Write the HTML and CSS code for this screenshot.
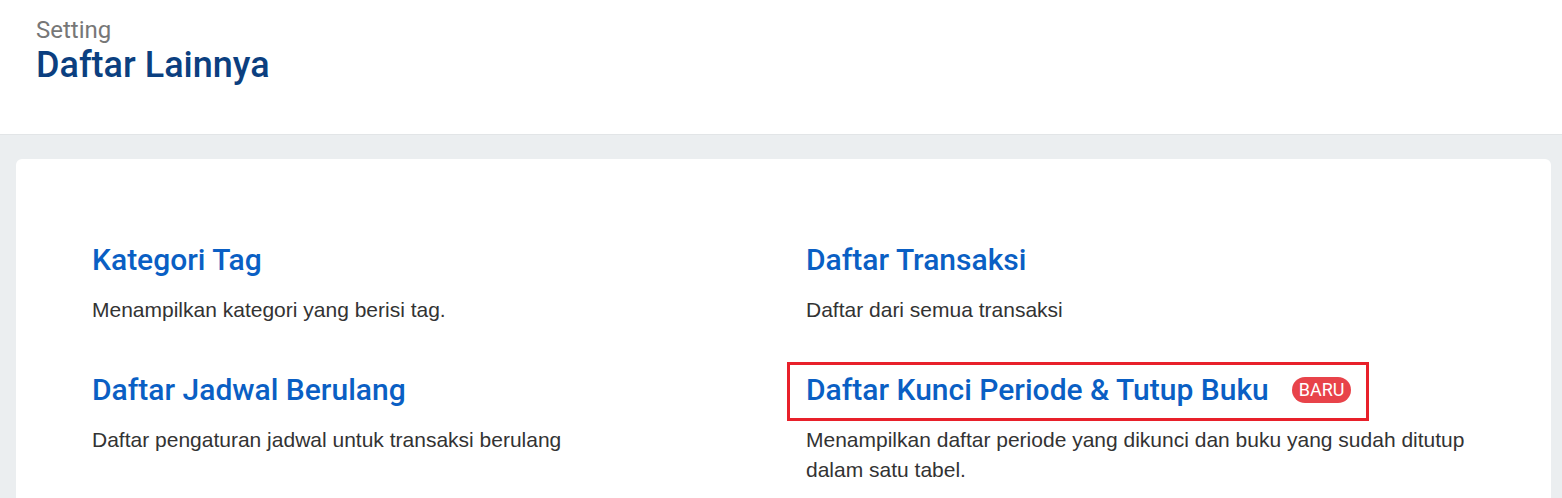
FILE: index.html
```html
<!DOCTYPE html>
<html lang="id">
<head>
  <meta charset="UTF-8" />
  <title>Setting – Daftar Lainnya</title>
  <link rel="stylesheet" href="styles.css">
</head>
<body>
  <header class="page-header">
    <p class="breadcrumb">Setting</p>
    <h1>Daftar Lainnya</h1>
  </header>

  <main class="page-body">
    <section class="card">
      <div class="list-grid">
        <div class="list-item">
          <a class="item-title" href="#">Kategori Tag</a>
          <p class="item-desc">Menampilkan kategori yang berisi tag.</p>
        </div>
        <div class="list-item">
          <a class="item-title" href="#">Daftar Transaksi</a>
          <p class="item-desc">Daftar dari semua transaksi</p>
        </div>
        <div class="list-item">
          <a class="item-title" href="#">Daftar Jadwal Berulang</a>
          <p class="item-desc">Daftar pengaturan jadwal untuk transaksi berulang</p>
        </div>
        <div class="list-item">
          <div class="title-wrap highlighted">
            <a class="item-title" href="#">Daftar Kunci Periode &amp; Tutup Buku</a>
            <span class="badge">BARU</span>
          </div>
          <p class="item-desc">Menampilkan daftar periode yang dikunci dan buku yang sudah ditutup dalam satu tabel.</p>
        </div>
      </div>
    </section>
  </main>
</body>
</html>
```

FILE: styles.css
```css
:root {
  --navy: #0b3f80;
  --link-blue: #0a5fc4;
  --gray-bg: #ebeef0;
  --text-color: #333;
  --badge-red: #e8434a;
  --mark-red: #e8202a;
}

body {
  margin: 0;
  font-family: Roboto, "Liberation Sans", sans-serif;
  background: var(--gray-bg);
  color: var(--text-color);
}

.page-header {
  box-sizing: border-box;
  background: #fff;
  padding: 16px 36px 0;
  height: 135px;
  border-bottom: 1px solid #e2e5e7;
}

.breadcrumb {
  margin: 0;
  font-size: 24px;
  line-height: 28px;
  color: #777;
}

h1 {
  margin: 0;
  font-size: 36px;
  line-height: 42px;
  font-weight: 500;
  color: var(--navy);
}

.page-body {
  padding: 24px 11px 0 16px;
}

.card {
  background: #fff;
  border-radius: 6px;
  padding: 83px 76px 40px;
  min-height: 300px;
}

.list-grid {
  display: grid;
  grid-template-columns: 714px 1fr;
  row-gap: 47px;
}

.list-item {
  display: flex;
  flex-direction: column;
  align-items: flex-start;
}

.title-wrap {
  display: flex;
  align-items: center;
  gap: 23px;
}

.title-wrap.highlighted {
  position: relative;
}

.title-wrap.highlighted::after {
  content: "";
  position: absolute;
  left: -19px;
  right: -18px;
  top: -10px;
  bottom: -13px;
  border: 3px solid var(--mark-red);
}

.item-title {
  font-size: 30px;
  line-height: 36px;
  font-weight: 500;
  color: var(--link-blue);
  text-decoration: none;
}

.badge {
  background: var(--badge-red);
  color: #fff;
  font-size: 18px;
  line-height: 26px;
  padding: 0 7px;
  border-radius: 13px;
}

.item-desc {
  margin: 17px 0 0;
  font-family: "Liberation Sans", Arial, sans-serif;
  font-size: 21px;
  line-height: 30px;
  color: var(--text-color);
}
```
